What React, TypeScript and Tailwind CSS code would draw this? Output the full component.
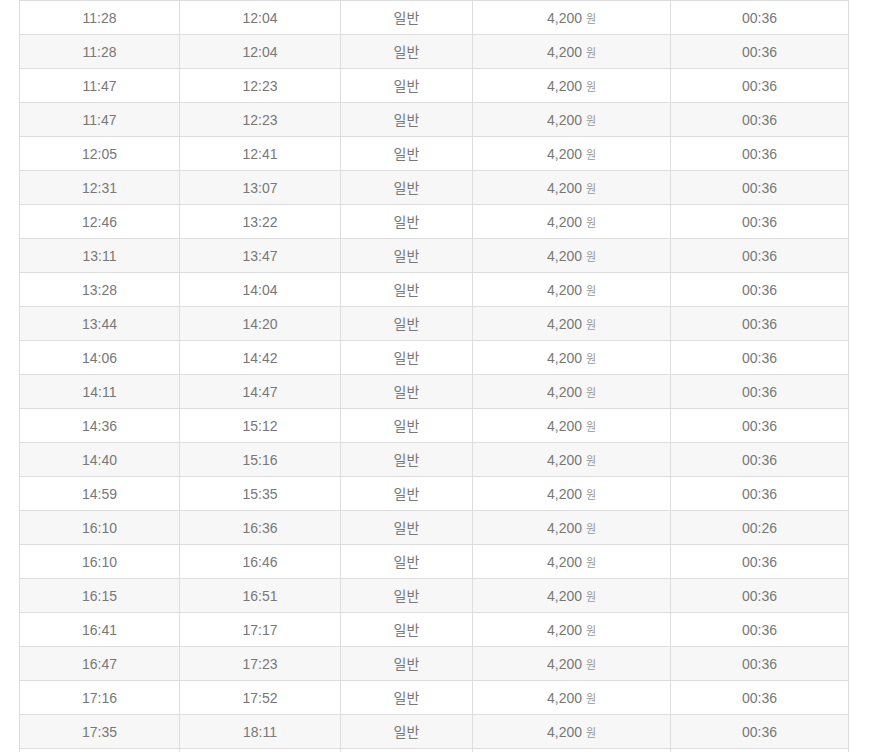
const rows: [string, string, string][] = [
  ["11:28", "12:04", "00:36"],
  ["11:28", "12:04", "00:36"],
  ["11:47", "12:23", "00:36"],
  ["11:47", "12:23", "00:36"],
  ["12:05", "12:41", "00:36"],
  ["12:31", "13:07", "00:36"],
  ["12:46", "13:22", "00:36"],
  ["13:11", "13:47", "00:36"],
  ["13:28", "14:04", "00:36"],
  ["13:44", "14:20", "00:36"],
  ["14:06", "14:42", "00:36"],
  ["14:11", "14:47", "00:36"],
  ["14:36", "15:12", "00:36"],
  ["14:40", "15:16", "00:36"],
  ["14:59", "15:35", "00:36"],
  ["16:10", "16:36", "00:26"],
  ["16:10", "16:46", "00:36"],
  ["16:15", "16:51", "00:36"],
  ["16:41", "17:17", "00:36"],
  ["16:47", "17:23", "00:36"],
  ["17:16", "17:52", "00:36"],
  ["17:35", "18:11", "00:36"],
  ["17:50", "18:26", "00:36"],
  ["18:05", "18:41", "00:36"],
];

export default function App() {
  return (
    <div className="bg-white pl-[19px] font-['Liberation_Sans','Noto_Sans_CJK_KR',sans-serif]">
      <table className="w-[829px] border-collapse table-fixed text-[14px] text-[#777]">
        <colgroup>
          <col className="w-[160px]" />
          <col className="w-[161px]" />
          <col className="w-[132px]" />
          <col className="w-[198px]" />
          <col className="w-[178px]" />
        </colgroup>
        <tbody>
          {rows.map((r, i) => (
            <tr key={i} className={i % 2 === 1 ? "bg-[#f7f7f7]" : "bg-white"}>
              <td className="h-[34px] border border-[#dddddd] p-0 pt-[2px] text-center">{r[0]}</td>
              <td className="h-[34px] border border-[#dddddd] p-0 pt-[2px] text-center">{r[1]}</td>
              <td className="h-[34px] border border-[#dddddd] p-0 pt-[2px] text-center">일반</td>
              <td className="h-[34px] border border-[#dddddd] p-0 pt-[2px] text-center">
                4,200 <span className="text-[11px] text-[#999]">원</span>
              </td>
              <td className="h-[34px] border border-[#dddddd] p-0 pt-[2px] text-center">{r[2]}</td>
            </tr>
          ))}
        </tbody>
      </table>
    </div>
  );
}
